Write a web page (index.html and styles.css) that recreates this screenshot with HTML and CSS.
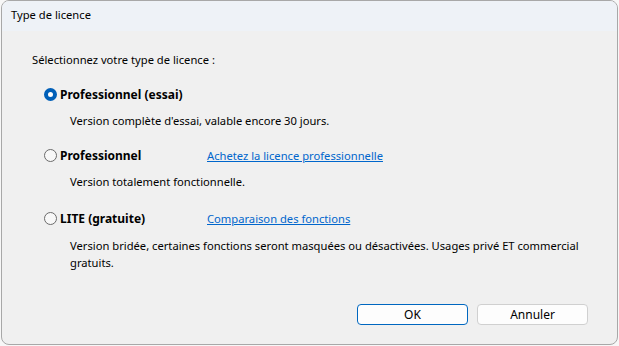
FILE: index.html
```html
<!DOCTYPE html>
<html lang="fr">

<head>
    <meta charset="UTF-8">
    <title>Type de licence</title>
    <link rel="stylesheet" href="styles.css">
</head>

<body>
    <div class="dialog">
        <div class="dialog__title">Type de licence</div>

        <div class="dialog__body">
            <p class="intro">Sélectionnez votre type de licence :</p>

            <div class="option">
                <label class="option__head">
                    <input type="radio" name="licence" checked>
                    <span class="option__name">Professionnel (essai)</span>
                </label>
                <p class="option__desc">Version complète d'essai, valable encore 30 jours.</p>
            </div>

            <div class="option">
                <label class="option__head">
                    <input type="radio" name="licence">
                    <span class="option__name">Professionnel</span>
                    <a class="option__link" href="#">Achetez la licence professionnelle</a>
                </label>
                <p class="option__desc">Version totalement fonctionnelle.</p>
            </div>

            <div class="option option--last">
                <label class="option__head">
                    <input type="radio" name="licence">
                    <span class="option__name">LITE (gratuite)</span>
                    <a class="option__link" href="#">Comparaison des fonctions</a>
                </label>
                <p class="option__desc option__desc--wide">Version bridée, certaines fonctions seront masquées ou désactivées. Usages privé ET commercial gratuits.</p>
            </div>

            <div class="buttons">
                <button class="btn btn--default">OK</button>
                <button class="btn">Annuler</button>
            </div>
        </div>
    </div>
</body>

</html>
```

FILE: styles.css
```css
html,
body {
    margin: 0;
    height: 100%;
}

body {
    background: #f7f7f7;
    font-family: "Noto Sans", "Liberation Sans", sans-serif;
    font-size: 11.2px;
    color: #000;
}

.dialog {
    box-sizing: border-box;
    margin-left: 1px;
    width: 617px;
    height: 345px;
    border: 1px solid #a8a8a8;
    border-radius: 8px;
    background: #f0f0f0;
    overflow: hidden;
    display: flex;
    flex-direction: column;
}

.dialog__title {
    height: 30px;
    line-height: 28px;
    padding-left: 9px;
    background: #eef2f7;
}

.dialog__body {
    flex: 1;
    display: flex;
    flex-direction: column;
    padding: 21px 29px 19px 30px;
}

p {
    margin: 0;
    line-height: 16px;
}

.intro {
    margin-bottom: 18px;
}

.option {
    padding-left: 12px;
}

.option--last {
    margin-top: 2px;
}

.option__head {
    display: flex;
    align-items: center;
    height: 16px;
}

.option__head input {
    appearance: none;
    -webkit-appearance: none;
    box-sizing: border-box;
    margin: 0 3px 0 0;
    width: 13px;
    height: 13px;
    border: 1px solid #6b6b6b;
    border-radius: 50%;
    background: #f8f8f8;
}

/* état sélectionné : disque bleu avec point blanc */
.option__head input:checked {
    border: 4px solid #005fb8;
    background: #fff;
}

.option__name {
    font-weight: bold;
    font-size: 12px;
    width: 147px;
}

.option__link {
    color: #0066cc;
    text-decoration: underline;
}

.option__desc {
    margin: 11px 0 18px 26px;
}

.option__desc--wide {
    width: 530px;
    line-height: 17px;
}

.buttons {
    margin-top: auto;
    display: flex;
    justify-content: flex-end;
    gap: 9px;
}

.btn {
    box-sizing: border-box;
    width: 111px;
    height: 21px;
    padding: 0;
    border: 1px solid #d0d0d0;
    border-radius: 4px;
    background: #fdfdfd;
    font: inherit;
    font-size: 12px;
    color: #000;
}

.btn--default {
    border-color: #0067c0;
}
```
